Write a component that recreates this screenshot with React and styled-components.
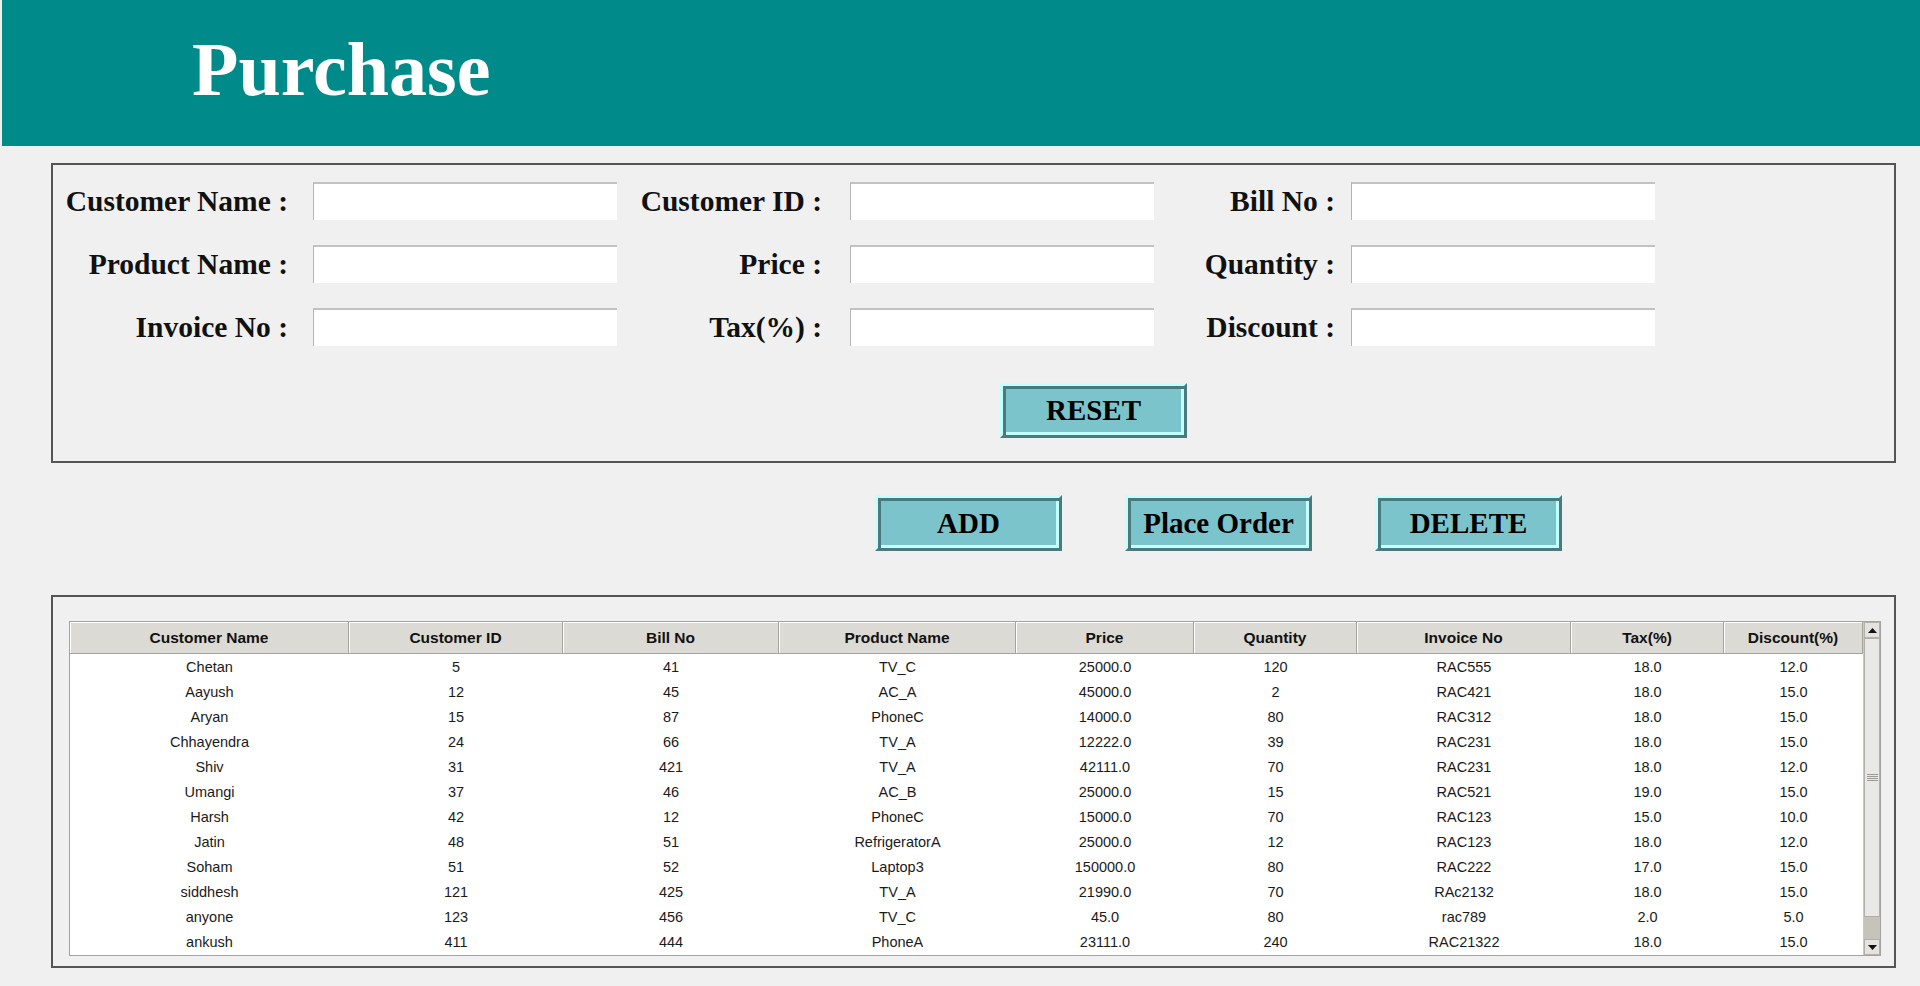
import React from "react";
import styled, { createGlobalStyle } from "styled-components";

const GlobalStyle = createGlobalStyle`
  html, body {
    margin: 0;
    padding: 0;
    background-color: #f0f0f0;
  }
`;

const Page = styled.div`
  width: 1920px;
  height: 986px;
  overflow: hidden;
  background-color: #f0f0f0;
  font-family: "Liberation Serif", "Times New Roman", serif;
`;

const TitleBar = styled.header`
  box-sizing: border-box;
  height: 146px;
  margin-left: 2px;
  padding: 31px 0 0 190px;
  background-color: #008b8a;
`;

const Title = styled.h1`
  margin: 0;
  font-family: "Liberation Serif", "Times New Roman", serif;
  font-weight: 700;
  font-size: 76px;
  line-height: 1;
  color: #ffffff;
`;

const Panel = styled.section`
  box-sizing: border-box;
  width: 1845px;
  height: ${(p) => p.$h}px;
  margin: ${(p) => p.$top}px 0 0 51px;
  border: 2px solid #555555;
  padding: ${(p) => p.$pad};
`;

const FieldGrid = styled.div`
  display: grid;
  grid-template-columns: 260px 304px 233px 304px 197px 304px;
  grid-auto-rows: 38px;
  row-gap: 25px;
`;

const Label = styled.label`
  display: flex;
  align-items: center;
  justify-content: flex-end;
  padding-right: ${(p) => p.$gap}px;
  padding-top: 1px;
  font-weight: 700;
  font-size: 29.5px;
  color: #111;
  white-space: nowrap;
`;

const Field = styled.input`
  box-sizing: border-box;
  width: 304px;
  height: 38px;
  margin: 0;
  border: none;
  border-top: 2px solid #c2c2c2;
  border-left: 1px solid #b4b4b4;
  background: #ffffff;
  outline: none;
  padding: 0 6px;
  font-size: 18px;
`;

const ResetRow = styled.div`
  display: flex;
  margin-top: 37px;
  padding-left: 947px;
`;

const ActionRow = styled.div`
  display: flex;
  gap: 63px;
  margin-top: 32px;
  padding-left: 875px;
`;

const BevelButton = styled.button`
  box-sizing: border-box;
  width: 187px;
  height: ${(p) => p.$h}px;
  padding: 0;
  border: 3px solid;
  border-color: #c2ffff #4a7a7d #4a7a7d #c2ffff;
  box-shadow: inset 3px 3px 0 #4a7a7d, inset -3px -3px 0 #c2ffff;
  background-color: #7cc4cc;
  font-family: "Liberation Serif", "Times New Roman", serif;
  font-weight: 700;
  font-size: 29px;
  color: #000;
  cursor: pointer;
`;

const ScrollPane = styled.div`
  box-sizing: border-box;
  display: flex;
  height: 335px;
  border: 1px solid #a3a3a3;
  background: #ffffff;
`;

const TableArea = styled.div`
  flex: 1;
  display: flex;
  flex-direction: column;
`;

const COLS = "279px 214px 216px 237px 178px 163px 214px 153px 139px";

const HeadRow = styled.div`
  display: grid;
  grid-template-columns: ${COLS};
  height: 32px;
  background: #dcdad5;
`;

const HeadCell = styled.div`
  display: flex;
  align-items: center;
  justify-content: center;
  border-right: 1px solid #a5a39d;
  border-bottom: 1px solid #a5a39d;
  box-shadow: inset 1px 1px 0 #ffffff;
  font-family: "Liberation Sans", Arial, sans-serif;
  font-weight: 700;
  font-size: 15.5px;
  color: #111;
`;

const BodyRow = styled.div`
  display: grid;
  grid-template-columns: ${COLS};
  height: 25px;
`;

const Cell = styled.div`
  display: flex;
  align-items: center;
  justify-content: center;
  font-family: "Liberation Sans", Arial, sans-serif;
  font-size: 14.5px;
  color: #1a1a1a;
`;

const ScrollBar = styled.div`
  width: 17px;
  display: flex;
  flex-direction: column;
  border-left: 1px solid #c9c9c9;
`;

const ArrowBtn = styled.div`
  box-sizing: border-box;
  height: 16px;
  display: flex;
  align-items: center;
  justify-content: center;
  background: #e4e3df;
  border: 1px solid #b2b0a8;
`;

const Thumb = styled.div`
  box-sizing: border-box;
  height: ${(p) => p.$h}px;
  display: flex;
  align-items: center;
  justify-content: center;
  background: #e8e8e6;
  border: 1px solid #b2b0a8;
`;

const Track = styled.div`
  flex: 1;
  background: #c6c3ba;
`;

const Grip = styled.div`
  width: 11px;
  height: 8px;
  background: repeating-linear-gradient(
    to bottom,
    #9c9a94 0px,
    #9c9a94 1px,
    transparent 1px,
    transparent 2px
  );
`;

const Arrow = ({ up }) => (
  <svg width="9" height="5" viewBox="0 0 9 5">
    <polygon points={up ? "0,5 9,5 4.5,0" : "0,0 9,0 4.5,5"} fill="#111" />
  </svg>
);

const headers = [
  "Customer Name",
  "Customer ID",
  "Bill No",
  "Product Name",
  "Price",
  "Quantity",
  "Invoice No",
  "Tax(%)",
  "Discount(%)",
];

const rows = [
  ["Chetan", "5", "41", "TV_C", "25000.0", "120", "RAC555", "18.0", "12.0"],
  ["Aayush", "12", "45", "AC_A", "45000.0", "2", "RAC421", "18.0", "15.0"],
  ["Aryan", "15", "87", "PhoneC", "14000.0", "80", "RAC312", "18.0", "15.0"],
  ["Chhayendra", "24", "66", "TV_A", "12222.0", "39", "RAC231", "18.0", "15.0"],
  ["Shiv", "31", "421", "TV_A", "42111.0", "70", "RAC231", "18.0", "12.0"],
  ["Umangi", "37", "46", "AC_B", "25000.0", "15", "RAC521", "19.0", "15.0"],
  ["Harsh", "42", "12", "PhoneC", "15000.0", "70", "RAC123", "15.0", "10.0"],
  ["Jatin", "48", "51", "RefrigeratorA", "25000.0", "12", "RAC123", "18.0", "12.0"],
  ["Soham", "51", "52", "Laptop3", "150000.0", "80", "RAC222", "17.0", "15.0"],
  ["siddhesh", "121", "425", "TV_A", "21990.0", "70", "RAc2132", "18.0", "15.0"],
  ["anyone", "123", "456", "TV_C", "45.0", "80", "rac789", "2.0", "5.0"],
  ["ankush", "411", "444", "PhoneA", "23111.0", "240", "RAC21322", "18.0", "15.0"],
];

// label text, right padding of the label cell
const fields = [
  ["Customer Name :", 25],
  ["Customer ID :", 28],
  ["Bill No :", 16],
  ["Product Name :", 25],
  ["Price :", 28],
  ["Quantity :", 16],
  ["Invoice No :", 25],
  ["Tax(%) :", 28],
  ["Discount :", 16],
];

const App = () => {
  return (
    <Page>
      <GlobalStyle />
      <TitleBar>
        <Title>Purchase</Title>
      </TitleBar>

      <Panel $h={300} $top={17} $pad="17px 0 0 0">
        <FieldGrid>
          {fields.map(([text, gap]) => (
            <React.Fragment key={text}>
              <Label $gap={gap}>{text}</Label>
              <Field type="text" />
            </React.Fragment>
          ))}
        </FieldGrid>
        <ResetRow>
          <BevelButton $h={55}>RESET</BevelButton>
        </ResetRow>
      </Panel>

      <ActionRow>
        <BevelButton $h={56}>ADD</BevelButton>
        <BevelButton $h={56}>Place Order</BevelButton>
        <BevelButton $h={56}>DELETE</BevelButton>
      </ActionRow>

      <Panel $h={373} $top={44} $pad="24px 13px 10px 16px">
        <ScrollPane>
          <TableArea>
            <HeadRow>
              {headers.map((h) => (
                <HeadCell key={h}>{h}</HeadCell>
              ))}
            </HeadRow>
            {rows.map((r, i) => (
              <BodyRow key={i}>
                {r.map((c, j) => (
                  <Cell key={j}>{c}</Cell>
                ))}
              </BodyRow>
            ))}
          </TableArea>
          <ScrollBar>
            <ArrowBtn>
              <Arrow up />
            </ArrowBtn>
            <Thumb $h={279}>
              <Grip />
            </Thumb>
            <Track />
            <ArrowBtn>
              <Arrow />
            </ArrowBtn>
          </ScrollBar>
        </ScrollPane>
      </Panel>
    </Page>
  );
};

export default App;
